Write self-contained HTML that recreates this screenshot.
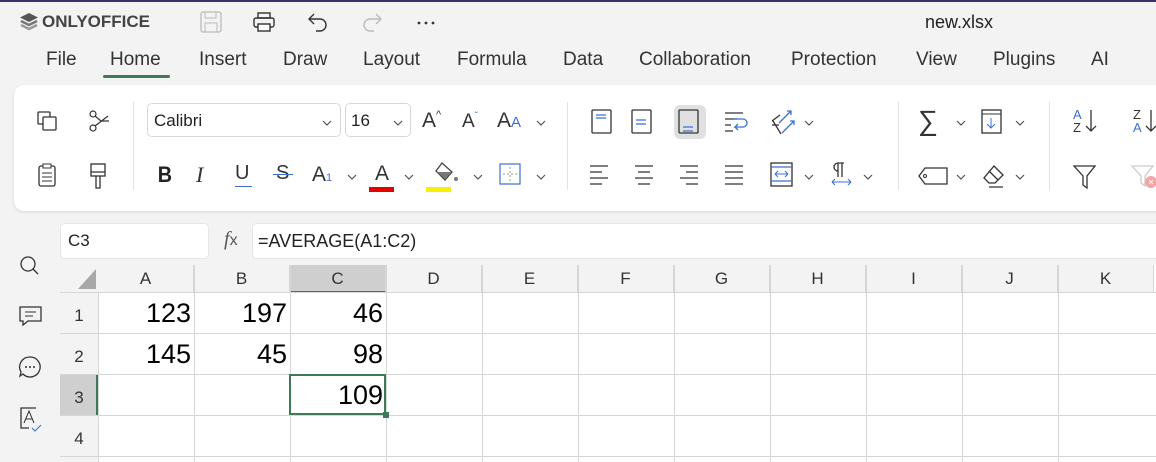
<!DOCTYPE html><html><head><style>
body{margin:0;width:1156px;height:462px;overflow:hidden;background:#f3f3f3;font-family:"Liberation Sans",sans-serif;position:relative;color:#222}
.a{position:absolute}
.tab{position:absolute;top:49px;font-size:19px;color:#333}
.card{position:absolute;left:14px;top:85px;width:1160px;height:126px;background:#fff;border-radius:10px;box-shadow:0 1px 3px rgba(0,0,0,.12)}
.sep{position:absolute;width:1px;background:#e2e2e2;top:102px;height:88px}
.chev{position:absolute;width:10px;height:6px}
svg{position:absolute;overflow:visible}
.col{position:absolute;top:265px;height:28px;width:95px;border-right:1px solid #d6d6d6;text-align:center;font-size:17px;line-height:28px;color:#333;background:#f3f3f3}
.row{position:absolute;left:60px;width:38px;height:40px;border-bottom:1px solid #d6d6d6;text-align:center;font-size:17px;line-height:46px;color:#333}
.num{position:absolute;font-size:27px;color:#000;text-align:right;width:90px}
</style></head><body>
<div class="a" style="left:0;top:0;width:1156px;height:2px;background:#3b3170"></div>
<svg style="left:18px;top:11px" width="22" height="22" viewBox="0 0 22 22"><path d="M11 2L20 6.5 11 11 2 6.5Z" fill="#555"/><path d="M3 10l8 4 8-4" stroke="#777" stroke-width="2.5" fill="none"/><path d="M3 14l8 4 8-4" stroke="#999" stroke-width="2.5" fill="none"/></svg>
<div class="a" style="left:42px;top:12px;font-size:17px;font-weight:bold;color:#444">ONLYOFFICE</div>
<svg style="left:200px;top:11px" width="22" height="22"><rect x="1" y="1" width="20" height="20" rx="2" fill="none" stroke="#bbb" stroke-width="1.3"/><rect x="5" y="1" width="11" height="6" fill="none" stroke="#bbb"/><rect x="5" y="12" width="12" height="9" fill="none" stroke="#bbb"/></svg>
<svg style="left:253px;top:12px" width="22" height="20"><rect x="5" y="1" width="12" height="5" fill="none" stroke="#333" stroke-width="1.4"/><rect x="1" y="6" width="20" height="9" rx="2" fill="none" stroke="#333" stroke-width="1.4"/><rect x="5" y="12" width="12" height="7" fill="#fff" stroke="#333" stroke-width="1.4"/></svg>
<svg style="left:307px;top:12px" width="22" height="20"><path d="M7 2L2 7l5 5M2 7h11a6 6 0 010 12H9" fill="none" stroke="#333" stroke-width="1.4"/></svg>
<svg style="left:361px;top:12px" width="22" height="20"><path d="M15 2l5 5-5 5M20 7H9a6 6 0 000 12h4" fill="none" stroke="#bbb" stroke-width="1.4"/></svg>
<svg style="left:417px;top:21px" width="20" height="4"><circle cx="2" cy="2" r="1.4" fill="#333"/><circle cx="9" cy="2" r="1.4" fill="#333"/><circle cx="16" cy="2" r="1.4" fill="#333"/></svg>
<div class="a" style="left:925px;top:12px;font-size:18px;color:#222">new.xlsx</div>
<div class="tab" style="left:46px">File</div><div class="tab" style="left:110px">Home</div>
<div class="a" style="left:103px;top:75px;width:67px;height:3px;background:#3d7a55;border-radius:2px"></div>
<div class="tab" style="left:199px">Insert</div><div class="tab" style="left:283px">Draw</div><div class="tab" style="left:363px">Layout</div><div class="tab" style="left:457px">Formula</div><div class="tab" style="left:563px">Data</div><div class="tab" style="left:639px">Collaboration</div><div class="tab" style="left:791px">Protection</div><div class="tab" style="left:916px">View</div><div class="tab" style="left:993px">Plugins</div><div class="tab" style="left:1091px">AI</div>
<div class="card"></div>
<div class="sep" style="left:133px"></div><div class="sep" style="left:567px"></div><div class="sep" style="left:898px"></div><div class="sep" style="left:1049px"></div>
<svg style="left:37px;top:111px" width="20" height="20"><rect x="1" y="1" width="12" height="12" rx="1" fill="none" stroke="#333" stroke-width="1.3"/><rect x="6" y="6" width="13" height="13" rx="1" fill="#fff" stroke="#333" stroke-width="1.3"/></svg>
<svg style="left:88px;top:110px" width="22" height="22"><circle cx="5" cy="4" r="3" fill="none" stroke="#333" stroke-width="1.2"/><circle cx="5" cy="18" r="3" fill="none" stroke="#333" stroke-width="1.2"/><path d="M7 6l6 5M7 16L20 6M13 11h8" stroke="#333" stroke-width="1.2"/></svg>
<svg style="left:38px;top:163px" width="18" height="24"><rect x="1" y="3" width="16" height="20" rx="2" fill="none" stroke="#333" stroke-width="1.3"/><rect x="5" y="1" width="8" height="4" fill="#fff" stroke="#333"/><path d="M4 10h10M4 14h10M4 18h10" stroke="#333"/></svg>
<svg style="left:90px;top:163px" width="16" height="26"><rect x="1" y="1" width="14" height="12" fill="none" stroke="#333" stroke-width="1.3"/><path d="M1 9h14M6 13v12h4V13" fill="none" stroke="#333" stroke-width="1.3"/></svg>
<div class="a" style="left:147px;top:103px;width:194px;height:34px;border:1px solid #d8d8d8;border-radius:5px;font-size:17px;line-height:34px;padding-left:6px;box-sizing:border-box">Calibri</div>
<div class="a" style="left:345px;top:103px;width:66px;height:34px;border:1px solid #d8d8d8;border-radius:5px;font-size:17px;line-height:34px;padding-left:5px;box-sizing:border-box">16</div>
<div class="a" style="left:422px;top:109px;font-size:21px;color:#333">A<span style="font-size:11px;vertical-align:top">^</span></div>
<div class="a" style="left:462px;top:111px;font-size:19px;color:#333">A<span style="font-size:10px;vertical-align:top;color:#3b6fd4">ˇ</span></div>
<div class="a" style="left:497px;top:109px;font-size:21px;color:#333">A<span style="font-size:15px;color:#3b6fd4">A</span></div>
<div class="a" style="left:157px;top:162px;font-size:22px;font-weight:bold;transform:scaleX(.9)">B</div>
<div class="a" style="left:196px;top:162px;font-size:22px;font-style:italic;color:#333;font-family:'Liberation Serif'">I</div>
<div class="a" style="left:235px;top:162px;font-size:20px;color:#333">U</div><div class="a" style="left:235px;top:186px;width:17px;height:1px;background:#3b6fd4"></div>
<div class="a" style="left:276px;top:162px;font-size:20px;color:#333">S</div><div class="a" style="left:273px;top:174px;width:20px;height:1px;background:#3b6fd4"></div>
<div class="a" style="left:312px;top:163px;font-size:21px;color:#333">A<span style="font-size:11px;color:#3b6fd4">1</span></div>
<div class="a" style="left:375px;top:162px;font-size:21px;color:#333">A</div><div class="a" style="left:369px;top:187px;width:25px;height:5px;background:#e60000"></div>
<svg style="left:434px;top:162px" width="26" height="22"><path d="M8 1l10 9-7 8-9-9z" fill="none" stroke="#444" stroke-width="1.3"/><path d="M3 10h14l-6 7z" fill="#777"/><circle cx="22" cy="17" r="2" fill="#777"/></svg>
<div class="a" style="left:426px;top:187px;width:25px;height:5px;background:#f8f000"></div>
<svg style="left:499px;top:163px" width="22" height="22"><rect x="1" y="1" width="20" height="20" fill="none" stroke="#3b6fd4" stroke-width="1.2"/><path d="M11 4v14M4 11h14" stroke="#999" stroke-dasharray="2 2"/></svg>
<svg style="left:587px;top:109px" width="220" height="26"><g fill="none" stroke="#333" stroke-width="1.3"><rect x="5" y="1" width="19" height="23" rx="1"/><rect x="45" y="1" width="19" height="23" rx="1"/></g>
<rect x="87" y="-4" width="32" height="34" rx="6" fill="#e0e0e0"/><rect x="92" y="1" width="19" height="23" rx="1" fill="none" stroke="#333" stroke-width="1.3"/>
<g stroke="#3b6fd4" stroke-width="1.3"><path d="M9 6h10M9 9h10M49 11h10M49 15h10M96 18h10M96 22h10"/></g>
<g stroke="#333" stroke-width="1.3" fill="none"><path d="M138 4h18M138 10h12M138 16h6M138 22h8"/></g><path d="M146 10h10a4 4 0 010 8h-8l3-3M148 18l3 3" stroke="#3b6fd4" stroke-width="1.3" fill="none"/>
<path d="M185 12l8-6M186 12l8 13M185 16h7" stroke="#333" stroke-width="1.3" fill="none"/><path d="M192 14l12-12M200 2h4v4M195 24l12-12M203 12h4v4" stroke="#3b6fd4" stroke-width="1.3" fill="none"/></svg>
<svg style="left:589px;top:165px" width="200" height="20"><g stroke="#333" stroke-width="1.3"><path d="M1 1h18M1 7h12M1 13h18M1 19h12M46 1h18M49 7h12M46 13h18M49 19h12M91 1h18M97 7h12M91 13h18M97 19h12M136 1h18M136 7h18M136 13h18M136 19h18"/></g></svg>
<svg style="left:770px;top:162px" width="100" height="26"><rect x="1" y="1" width="21" height="23" fill="none" stroke="#333" stroke-width="1.3"/><path d="M1 5h21M1 19h21" stroke="#3b6fd4" stroke-width="1.3"/><path d="M5 12h13M5 12l3-3M5 12l3 3M18 12l-3-3M18 12l-3 3" stroke="#3b6fd4" fill="none"/><path d="M68 1v14M72 1v14M68 1h6M68 1a4 4 0 000 8" stroke="#333" fill="none" stroke-width="1.3"/><path d="M62 20h19M62 20l3-3M62 20l3 3M81 20l-3-3M81 20l-3 3" stroke="#3b6fd4" fill="none"/></svg>
<div class="a" style="left:918px;top:105px;font-size:28px;color:#333">∑</div>
<svg style="left:981px;top:109px" width="22" height="26"><rect x="1" y="1" width="19" height="23" fill="none" stroke="#333" stroke-width="1.3"/><path d="M1 5h19" stroke="#333"/><path d="M10 9v10M6 15l4 4 4-4" stroke="#3b6fd4" fill="none"/></svg>
<svg style="left:918px;top:167px" width="30" height="18"><path d="M7 1h22v16H7L1 9z" fill="none" stroke="#333" stroke-width="1.3"/><circle cx="7" cy="9" r="1.5" fill="none" stroke="#333"/></svg>
<svg style="left:982px;top:164px" width="24" height="24"><path d="M12 2l9 9-8 8H7l-5-5z" fill="none" stroke="#333" stroke-width="1.3"/><path d="M7 7l9 9M7 23h14" stroke="#333" stroke-width="1.3"/></svg>
<!-- chevrons -->
<svg style="left:0;top:0" width="1156" height="300"><g fill="none" stroke="#555" stroke-width="1.2">
<path d="M323 121l4 4 4-4M394 121l4 4 4-4M537 121l4 4 4-4M805 121l4 4 4-4M957 121l4 4 4-4M1016 121l4 4 4-4"/>
<path d="M348 175l4 4 4-4M405 175l4 4 4-4M474 175l4 4 4-4M537 175l4 4 4-4M805 175l4 4 4-4M864 175l4 4 4-4M957 175l4 4 4-4M1016 175l4 4 4-4M191 243l4 4 4-4"/></g></svg>
<div class="a" style="left:1073px;top:108px;font-size:13px;line-height:13px;color:#3b6fd4">A<br><span style="color:#333">Z</span></div>
<svg style="left:1085px;top:109px" width="12" height="24"><path d="M6 1v21M1 17l5 5 5-5" stroke="#333" fill="none" stroke-width="1.3"/></svg>
<div class="a" style="left:1133px;top:108px;font-size:13px;line-height:13px;color:#333">Z<br><span style="color:#3b6fd4">A</span></div>
<svg style="left:1145px;top:109px" width="12" height="24"><path d="M6 1v21M1 17l5 5 5-5" stroke="#333" fill="none" stroke-width="1.3"/></svg>
<svg style="left:1073px;top:165px" width="24" height="24"><path d="M1 1h21l-8 10v12l-4-3v-9z" fill="none" stroke="#333" stroke-width="1.3"/></svg>
<svg style="left:1131px;top:165px" width="26" height="26"><path d="M1 1h21l-8 10v10l-4-3v-7z" fill="none" stroke="#ccc" stroke-width="1.3"/><circle cx="20" cy="17" r="6" fill="#f5a3a3"/><path d="M18 15l4 4M22 15l-4 4" stroke="#fff"/></svg>
<svg style="left:19px;top:255px" width="24" height="200"><circle cx="9" cy="9" r="7" fill="none" stroke="#333" stroke-width="1.3"/><path d="M14 14l5 5" stroke="#333" stroke-width="1.3"/>
<path d="M1 52h21v14H9l-5 4v-4H1z" fill="none" stroke="#333" stroke-width="1.3"/><path d="M6 57h11M6 61h8" stroke="#333"/>
<path d="M11 102a10 10 0 11-7 17l-3 2 1-4a10 10 0 019-15z" fill="none" stroke="#333" stroke-width="1.3"/><circle cx="7" cy="112" r="1" fill="#333"/><circle cx="11" cy="112" r="1" fill="#333"/><circle cx="15" cy="112" r="1" fill="#333"/>
<path d="M17 153H2v20h8" fill="none" stroke="#333" stroke-width="1.3"/><path d="M5 168l5-12 5 12M7 164h6" fill="none" stroke="#333"/><path d="M13 173l3 3 6-6" stroke="#3b6fd4" fill="none"/></svg>
<div class="a" style="left:60px;top:223px;width:149px;height:36px;background:#fff;border-radius:5px;border:1px solid #e6e6e6;box-sizing:border-box;font-size:17px;line-height:34px;padding-left:7px">C3</div>
<div class="a" style="left:224px;top:228px;font-size:20px;color:#555;font-family:'Liberation Serif';font-style:italic">f<span style="font-style:normal;font-family:'Liberation Sans';font-size:16px">x</span></div>
<div class="a" style="left:252px;top:223px;width:920px;height:36px;background:#fff;border-radius:5px;border:1px solid #e6e6e6;box-sizing:border-box;font-size:18px;line-height:34px;padding-left:5px">=AVERAGE(A1:C2)</div>
<div class="a" style="left:60px;top:265px;width:1100px;height:197px;background:#fff"></div>
<div class="a" style="left:60px;top:265px;width:38px;height:28px;background:#f3f3f3;border-right:1px solid #d6d6d6"></div>
<svg style="left:77px;top:268px" width="20" height="22"><path d="M19 1v20H1z" fill="#a8a8a8"/></svg>
<div class="a" style="left:60px;top:293px;width:38px;height:169px;background:#f3f3f3"></div>
<div class="col" style="left:98px">A</div><div class="col" style="left:194px">B</div><div class="col" style="left:290px;background:#cfcfcf;border-bottom:2px solid #3d7a55;height:26px">C</div><div class="col" style="left:386px">D</div><div class="col" style="left:482px">E</div><div class="col" style="left:578px">F</div><div class="col" style="left:674px">G</div><div class="col" style="left:770px">H</div><div class="col" style="left:866px">I</div><div class="col" style="left:962px">J</div><div class="col" style="left:1058px">K</div>
<div class="a" style="left:60px;top:292px;width:1100px;height:1px;background:#d6d6d6"></div>
<svg style="left:0;top:0" width="1156" height="462"><g stroke="#d6d6d6"><path d="M98.5 293v169M194.5 265v197M290.5 265v197M386.5 265v197M482.5 265v197M578.5 265v197M674.5 265v197M770.5 265v197M866.5 265v197M962.5 265v197M1058.5 265v197M60 333.5h1100M60 374.5h1100M60 415.5h1100M60 456.5h1100"/></g></svg>
<div class="a" style="left:60px;top:375px;width:38px;height:40px;background:#cfcfcf;border-right:2px solid #3d7a55;box-sizing:border-box"></div>
<div class="row" style="top:293px">1</div><div class="row" style="top:334px">2</div><div class="row" style="top:375px">3</div><div class="row" style="top:416px">4</div>
<div class="num" style="left:101px;top:298px">123</div><div class="num" style="left:197px;top:298px">197</div><div class="num" style="left:293px;top:298px">46</div>
<div class="num" style="left:101px;top:339px">145</div><div class="num" style="left:197px;top:339px">45</div><div class="num" style="left:293px;top:339px">98</div>
<div class="a" style="left:289px;top:374px;width:97px;height:41px;border:2px solid #3d7a55;box-sizing:border-box"></div>
<div class="a" style="left:383px;top:412px;width:6px;height:6px;background:#3d7a55"></div>
<div class="num" style="left:293px;top:380px">109</div>
</body></html>
